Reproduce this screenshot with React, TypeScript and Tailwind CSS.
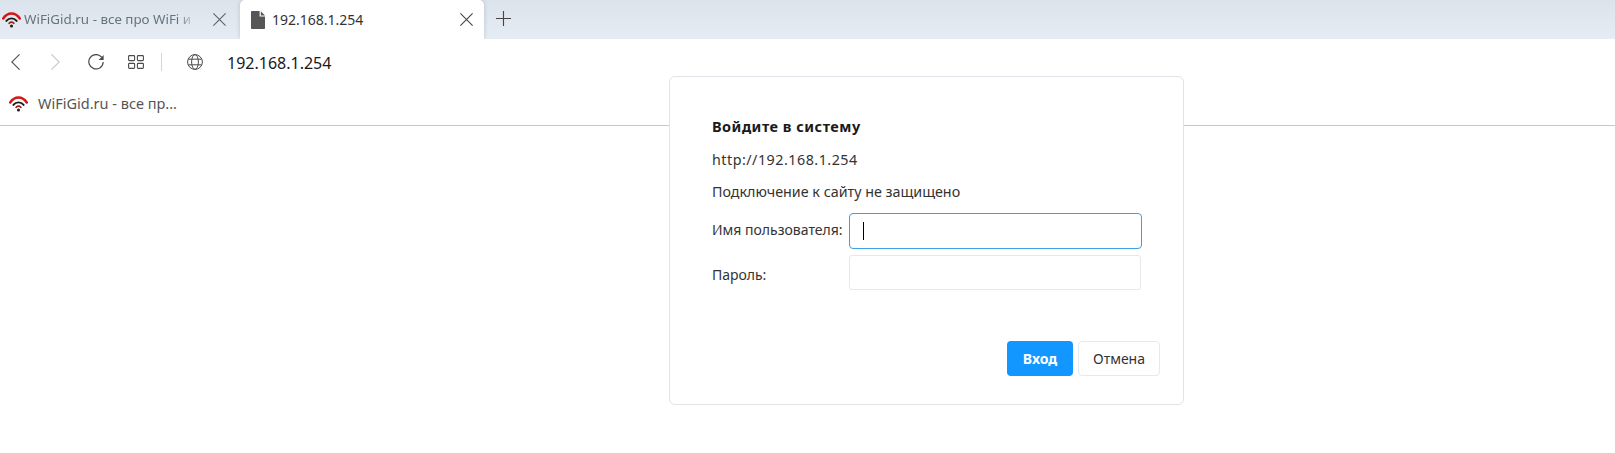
import React from 'react';

function WifiIcon({ className }: { className?: string }) {
  return (
    <svg viewBox="0 0 20 16" className={className} fill="none">
      <path d="M1.3 6.4C6 -0.6 14 -0.6 18.7 6.4" stroke="#d81414" strokeWidth="2.6" strokeLinecap="round" />
      <path d="M4.6 9C7.6 5.4 12.4 5.4 15.4 9" stroke="#1c1c1c" strokeWidth="2" strokeLinecap="round" />
      <path d="M7.4 11.5C9 10 11 10 12.6 11.5" stroke="#a81818" strokeWidth="1.6" strokeLinecap="round" />
      <circle cx="10" cy="14.3" r="1.6" fill="#1c1c1c" />
    </svg>
  );
}

function FileIcon() {
  return (
    <svg viewBox="0 0 14 18" className="w-[14px] h-[18px] shrink-0">
      <path d="M1 0H8.6V5.6H14V17C14 17.6 13.6 18 13 18H1C0.4 18 0 17.6 0 17V1C0 0.4 0.4 0 1 0Z" fill="#565656" />
      <path d="M9.8 0.2L14 4.4H9.8Z" fill="#565656" />
    </svg>
  );
}

function CloseIcon({ className }: { className?: string }) {
  return (
    <svg viewBox="0 0 13 13" className={`w-[13px] h-[13px] shrink-0 ${className ?? ''}`} fill="none" stroke="currentColor" strokeWidth="1.1">
      <path d="M0.4 0.4L12.6 12.6M12.6 0.4L0.4 12.6" />
    </svg>
  );
}

function PlusIcon() {
  return (
    <svg viewBox="0 0 15 15" className="w-[15px] h-[15px]" fill="none" stroke="#444444" strokeWidth="1.1">
      <path d="M7.5 0V15M0 7.5H15" />
    </svg>
  );
}

function BackIcon({ className }: { className?: string }) {
  return (
    <svg viewBox="0 0 9 16" className={`w-[9px] h-[16px] ${className ?? ''}`} fill="none" stroke="currentColor" strokeWidth="1.1">
      <path d="M8.6 0.3L0.8 8L8.6 15.7" />
    </svg>
  );
}

function ForwardIcon({ className }: { className?: string }) {
  return (
    <svg viewBox="0 0 9 16" className={`w-[9px] h-[16px] ${className ?? ''}`} fill="none" stroke="currentColor" strokeWidth="1.1">
      <path d="M0.4 0.3L8.2 8L0.4 15.7" />
    </svg>
  );
}

function ReloadIcon() {
  return (
    <svg viewBox="0 0 16 16" className="w-[16px] h-[16px]" fill="none">
      <path d="M13.6 3.2A7.2 7.2 0 1 0 15.2 8" stroke="#4a4a4a" strokeWidth="1.2" />
      <path d="M15.6 1V6H10.6Z" fill="#4a4a4a" />
    </svg>
  );
}

function AppsIcon() {
  return (
    <svg viewBox="0 0 16 14" className="w-[16px] h-[14px]" fill="none" stroke="#4a4a4a" strokeWidth="1.1">
      <rect x="0.6" y="0.6" width="6" height="5" rx="0.8" />
      <rect x="9.4" y="0.6" width="6" height="5" rx="0.8" />
      <rect x="0.6" y="8.4" width="6" height="5" rx="0.8" />
      <rect x="9.4" y="8.4" width="6" height="5" rx="0.8" />
    </svg>
  );
}

function GlobeIcon() {
  return (
    <svg viewBox="0 0 16 16" className="w-[16px] h-[16px]" fill="none" stroke="#4a4a4a" strokeWidth="1">
      <circle cx="8" cy="8" r="7.4" />
      <ellipse cx="8" cy="8" rx="3.4" ry="7.4" />
      <path d="M1.4 5.2H14.6M1.4 10.8H14.6" />
    </svg>
  );
}

function TabStrip() {
  return (
    <div className="flex h-[39px] bg-gradient-to-b from-[#dbe3ec] to-[#e6ecf3]">
      <div className="flex items-center w-[240px] shrink-0">
        <WifiIcon className="w-[19px] h-[16px] ml-[2px] mr-[3px] shrink-0" />
        <span className="w-[172px] whitespace-nowrap text-[13.4px] text-[#66747f] [mask-image:linear-gradient(to_right,black_90%,transparent)]">WiFiGid.ru - все про WiFi и</span>
        <CloseIcon className="ml-[17px] text-[#5c6268]" />
      </div>
      <div className="flex items-center w-[244px] shrink-0 bg-white rounded-t-[5px] shadow-[0_0_4px_rgba(90,110,130,0.3)] pl-[11px] pr-[11px]">
        <FileIcon />
        <span className="ml-[7px] text-[14px] text-[#333333]">192.168.1.254</span>
        <CloseIcon className="ml-auto text-[#444444]" />
      </div>
      <div className="flex items-center pl-[12px] pb-[2px]">
        <PlusIcon />
      </div>
    </div>
  );
}

function Toolbar() {
  return (
    <div className="relative flex items-center h-[46px] bg-white pl-[11px]">
      <BackIcon className="text-[#555555]" />
      <ForwardIcon className="ml-[31px] text-[#c8c8c8]" />
      <div className="ml-[28px]"><ReloadIcon /></div>
      <div className="ml-[24px]"><AppsIcon /></div>
      <div className="ml-[17px] w-px h-[18px] bg-[#d6d6d6]" />
      <div className="ml-[25px]"><GlobeIcon /></div>
      <span className="ml-[24px] pt-[2px] text-[16px] text-[#1a1a1a]">192.168.1.254</span>
    </div>
  );
}

function BookmarkBar() {
  return (
    <div className="flex items-center h-[41px] bg-white border-b-[1.5px] border-[#c8c8c8] pl-[9px] pb-[3px]">
      <WifiIcon className="w-[19px] h-[16px]" />
      <span className="ml-[10px] text-[14.5px] text-[#555555]">WiFiGid.ru - все пр...</span>
    </div>
  );
}

function LoginDialog() {
  return (
    <div className="absolute left-[669px] top-[76px] w-[515px] h-[329px] flex flex-col bg-white border-[1.5px] border-[#e0e4e8] rounded-[6px] pt-[39px] pl-[42px] pr-[23px] pb-[28px] text-[14px] text-[#333333]">
      <h1 className="text-[14.5px] font-bold tracking-[0.5px] text-[#1a1a1a] leading-[20px]">Войдите в систему</h1>
      <p className="mt-[14px] text-[14.3px] tracking-[0.5px] leading-[20px]">http://192.168.1.254</p>
      <p className="mt-[12px] text-[14.3px] leading-[20px]">Подключение к сайту не защищено</p>
      <div className="mt-[11px] grid grid-cols-[137px_293px] gap-y-[6px] items-center">
        <label className="pb-[3px]">Имя пользователя:</label>
        <div className="h-[36px] flex items-center border-[1.5px] border-[#3d9fe6] rounded-[4px] pl-[13px]">
          <div className="w-px h-[18px] bg-black" />
        </div>
        <label className="pt-[3px]">Пароль:</label>
        <div className="h-[35px] w-[292px] border-[1.5px] border-[#e6e9ec] rounded-[3px]" />
      </div>
      <div className="mt-auto flex justify-end gap-[5px]">
        <button className="w-[66px] h-[35px] bg-[#1296ff] rounded-[4px] text-white font-bold">Вход</button>
        <button className="w-[82px] h-[35px] bg-white border-[1.5px] border-[#e6e9ec] rounded-[4px] text-[#333333]">Отмена</button>
      </div>
    </div>
  );
}

export default function App() {
  return (
    <div className="relative w-[1615px] h-[453px] overflow-hidden bg-white font-['Noto_Sans','Open_Sans',sans-serif]">
      <TabStrip />
      <Toolbar />
      <BookmarkBar />
      <LoginDialog />
    </div>
  );
}
